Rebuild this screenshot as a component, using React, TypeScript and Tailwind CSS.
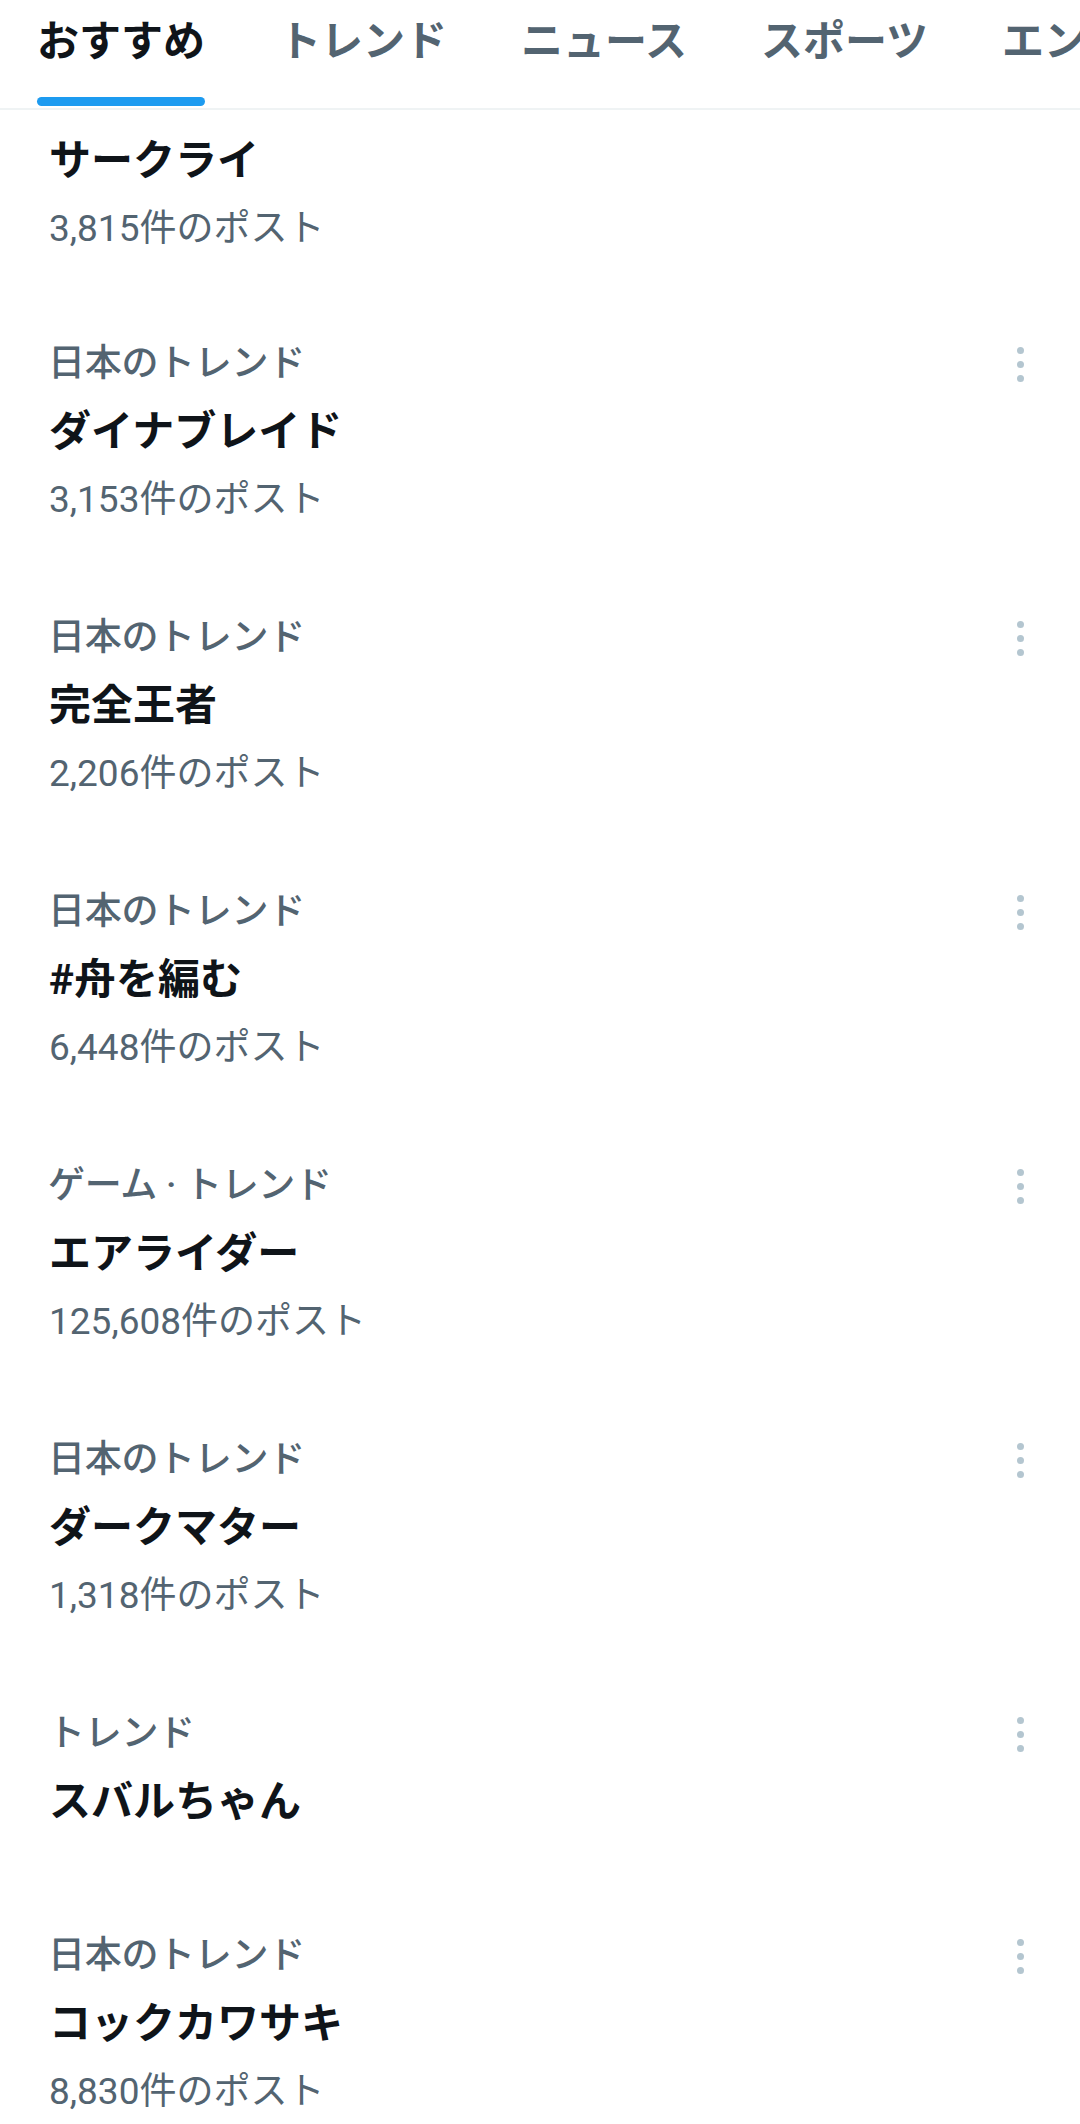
type Trend = {
  category: string;
  title: string;
  count?: string;
};

const tabs = ['おすすめ', 'トレンド', 'ニュース', 'スポーツ', 'エンターテイメント'];

const trends: Trend[] = [
  { category: '日本のトレンド', title: 'ダイナブレイド', count: '3,153件のポスト' },
  { category: '日本のトレンド', title: '完全王者', count: '2,206件のポスト' },
  { category: '日本のトレンド', title: '#舟を編む', count: '6,448件のポスト' },
  { category: 'ゲーム · トレンド', title: 'エアライダー', count: '125,608件のポスト' },
  { category: '日本のトレンド', title: 'ダークマター', count: '1,318件のポスト' },
  { category: 'トレンド', title: 'スバルちゃん' },
  { category: '日本のトレンド', title: 'コックカワサキ', count: '8,830件のポスト' },
];

const font = { fontFamily: 'Roboto, "Noto Sans CJK JP", sans-serif' };
const mediumFont = { fontFamily: 'Roboto, "Noto Sans CJK JP Medium", "Noto Sans CJK JP", sans-serif' };

function MoreDots() {
  return (
    <div className="flex flex-col gap-[7px] pr-[56px]">
      <span className="w-[7px] h-[7px] rounded-full bg-[#b4c6d0]"></span>
      <span className="w-[7px] h-[7px] rounded-full bg-[#b4c6d0]"></span>
      <span className="w-[7px] h-[7px] rounded-full bg-[#b4c6d0]"></span>
    </div>
  );
}

function TrendItem({ trend }: { trend: Trend }) {
  return (
    <div className={trend.count ? 'pt-[35px] pb-[35px]' : 'pt-[35px] pb-[51px]'}>
      {/* category row with menu */}
      <div className="flex items-center justify-between pl-[48px]">
        <span className="text-[37px] leading-[68px] font-medium text-[#536471] tracking-[-0.3px]" style={mediumFont}>
          {trend.category}
        </span>
        <MoreDots />
      </div>
      <div className="pl-[49px] text-[42px] leading-[68px] font-bold text-[#0f1419]">{trend.title}</div>
      {trend.count && (
        <div className="pl-[49px] text-[37px] leading-[68px] text-[#536471]">{trend.count}</div>
      )}
    </div>
  );
}

export default function App() {
  return (
    <div className="w-[1080px] h-[2124px] overflow-hidden bg-white" style={font}>
      {/* Tabs */}
      <div className="border-b-2 border-[#eff3f4]">
        <div className="flex overflow-hidden whitespace-nowrap">
          {tabs.map((tab, i) => (
            <div key={tab} className="shrink-0 px-[37px] flex flex-col items-center">
              <span
                className={
                  i === 0
                    ? 'text-[42px] leading-[84px] font-bold text-[#0f1419]'
                    : 'text-[42px] leading-[84px] font-bold text-[#536471]'
                }
              >
                {tab}
              </span>
              <div className="h-[24px] w-full flex items-start pt-[13px]">
                {i === 0 && <div className="w-full h-[9px] rounded-full bg-[#1d9bf0]"></div>}
              </div>
            </div>
          ))}
        </div>
      </div>

      {/* First item, scrolled partly under the header */}
      <div className="pt-[17px] pb-[32px]">
        <div className="pl-[49px] text-[42px] leading-[68px] font-bold text-[#0f1419]">サークライ</div>
        <div className="pl-[49px] text-[37px] leading-[68px] text-[#536471]">3,815件のポスト</div>
      </div>

      {trends.map((t) => (
        <TrendItem key={t.title} trend={t} />
      ))}
    </div>
  );
}
